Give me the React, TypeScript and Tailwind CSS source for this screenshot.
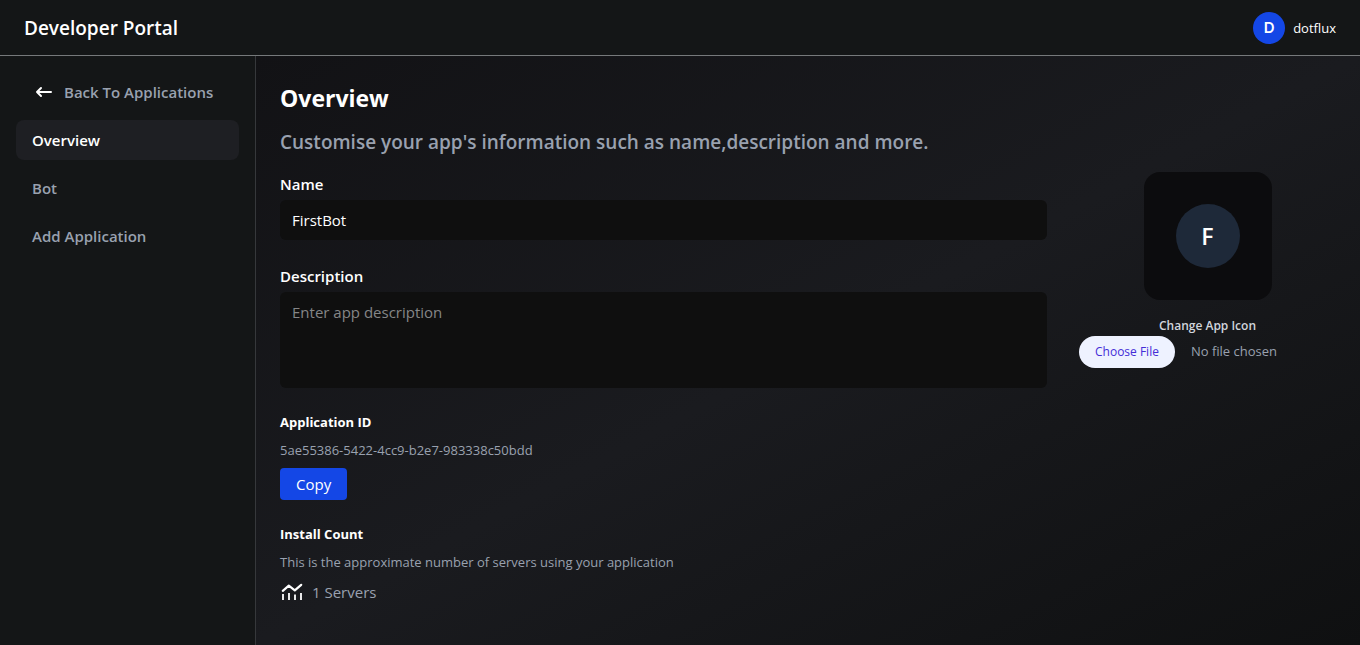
import { useState } from "react";

const navItems = ["Overview", "Bot", "Add Application"];

function ArrowLeft() {
  return (
    <svg viewBox="0 0 24 24" className="size-6 shrink-0 text-white" fill="none" stroke="currentColor" strokeWidth="2" strokeLinecap="round" strokeLinejoin="round" aria-hidden="true">
      <path d="M19 12H5M9 8L5 12L9 16" />
    </svg>
  );
}

function ChartIcon() {
  return (
    <svg viewBox="0 0 24 24" className="size-6 shrink-0 text-white" fill="none" stroke="currentColor" strokeLinejoin="round" aria-hidden="true">
      <path d="M2.8 10.8L8.8 5.6L14.8 10.4L21.2 4.8" strokeWidth="2.2" strokeLinecap="round" />
      <path d="M3 14V20M9 13V20M15 14.5V20M21 13V20" strokeWidth="1.8" />
    </svg>
  );
}

export default function App() {
  const [name, setName] = useState("FirstBot");
  const [description, setDescription] = useState("");

  return (
    <div className="flex min-h-screen flex-col bg-[#141617] font-['Open_Sans',sans-serif] text-[15px] leading-6 text-white">
      <header className="flex h-14 items-center justify-between border-b border-[#76797b] px-6">
        <h1 className="text-[19px] leading-7 font-semibold">Developer Portal</h1>
        <div className="flex items-center gap-2">
          <span className="flex size-8 items-center justify-center rounded-full bg-[#1447e6] font-['Inter',sans-serif] text-[15px] font-semibold">D</span>
          <span className="text-[13px] leading-5">dotflux</span>
        </div>
      </header>
      <div className="flex flex-1">
        <aside className="w-64 shrink-0 border-r border-[#36383b] p-4">
          <nav className="flex flex-col gap-2 font-semibold text-[#99a1af]">
            <a href="#applications" className="flex h-10 items-center gap-2 px-4">
              <ArrowLeft />
              Back To Applications
            </a>
            {navItems.map((item, i) => (
              <a
                key={item}
                href={"#" + item}
                className={i === 0 ? "flex h-10 items-center rounded-lg bg-[#1e1f23] px-4 text-white" : "flex h-10 items-center px-4"}
              >
                {item}
              </a>
            ))}
          </nav>
        </aside>
        <main className="flex-1 bg-linear-to-br from-[#121215] via-[#1a1b1f] to-[#0f1011] p-6">
          <h2 className="text-[23px] leading-9 font-bold">Overview</h2>
          <p className="mt-3 text-[19px] leading-7 font-semibold text-[#99a1af]">
            Customise your app's information such as name,description and more.
          </p>
          <div className="mt-4 flex gap-8">
            <div className="min-w-0 flex-1">
              <label htmlFor="name" className="block font-semibold">Name</label>
              <input
                id="name"
                value={name}
                onChange={(e) => setName(e.target.value)}
                className="mt-1 block h-10 w-full rounded-md bg-[#0f0f0f] px-3 outline-none"
              />
              <label htmlFor="description" className="mt-6 block font-semibold">Description</label>
              <textarea
                id="description"
                value={description}
                onChange={(e) => setDescription(e.target.value)}
                placeholder="Enter app description"
                className="mt-1 block h-24 w-full resize-none rounded-md bg-[#0f0f0f] px-3 py-2 outline-none placeholder:text-[#858687]"
              />
              <h3 className="mt-6 text-[13px] leading-5 font-bold">Application ID</h3>
              <p className="mt-2 text-[13px] leading-5 text-[#99a1af]">5ae55386-5422-4cc9-b2e7-983338c50bdd</p>
              <button type="button" className="mt-2 h-8 rounded-sm bg-[#1447e6] px-4">Copy</button>
              <h3 className="mt-6 text-[13px] leading-5 font-bold">Install Count</h3>
              <p className="mt-2 text-[13px] leading-5 text-[#99a1af]">
                This is the approximate number of servers using your application
              </p>
              <div className="mt-2 flex items-center gap-2 text-[#99a1af]">
                <ChartIcon />
                1 Servers
              </div>
            </div>
            <div className="w-[257px] shrink-0">
              <div className="mx-auto flex size-32 items-center justify-center rounded-2xl bg-[#0c0c0e]">
                <span className="flex size-16 items-center justify-center rounded-full bg-[#1e2939] text-[23px] font-semibold">F</span>
              </div>
              <label htmlFor="icon" className="mt-4 block text-center text-[12px] leading-5 font-semibold text-[#d1d5dc]">
                Change App Icon
              </label>
              <input
                id="icon"
                type="file"
                className="block w-full text-[13px] leading-5 text-[#99a1af] file:mr-4 file:h-8 file:rounded-full file:bg-[#eef2ff] file:px-4 file:text-[12px] file:font-normal file:text-[#432dd7]"
              />
            </div>
          </div>
        </main>
      </div>
    </div>
  );
}
